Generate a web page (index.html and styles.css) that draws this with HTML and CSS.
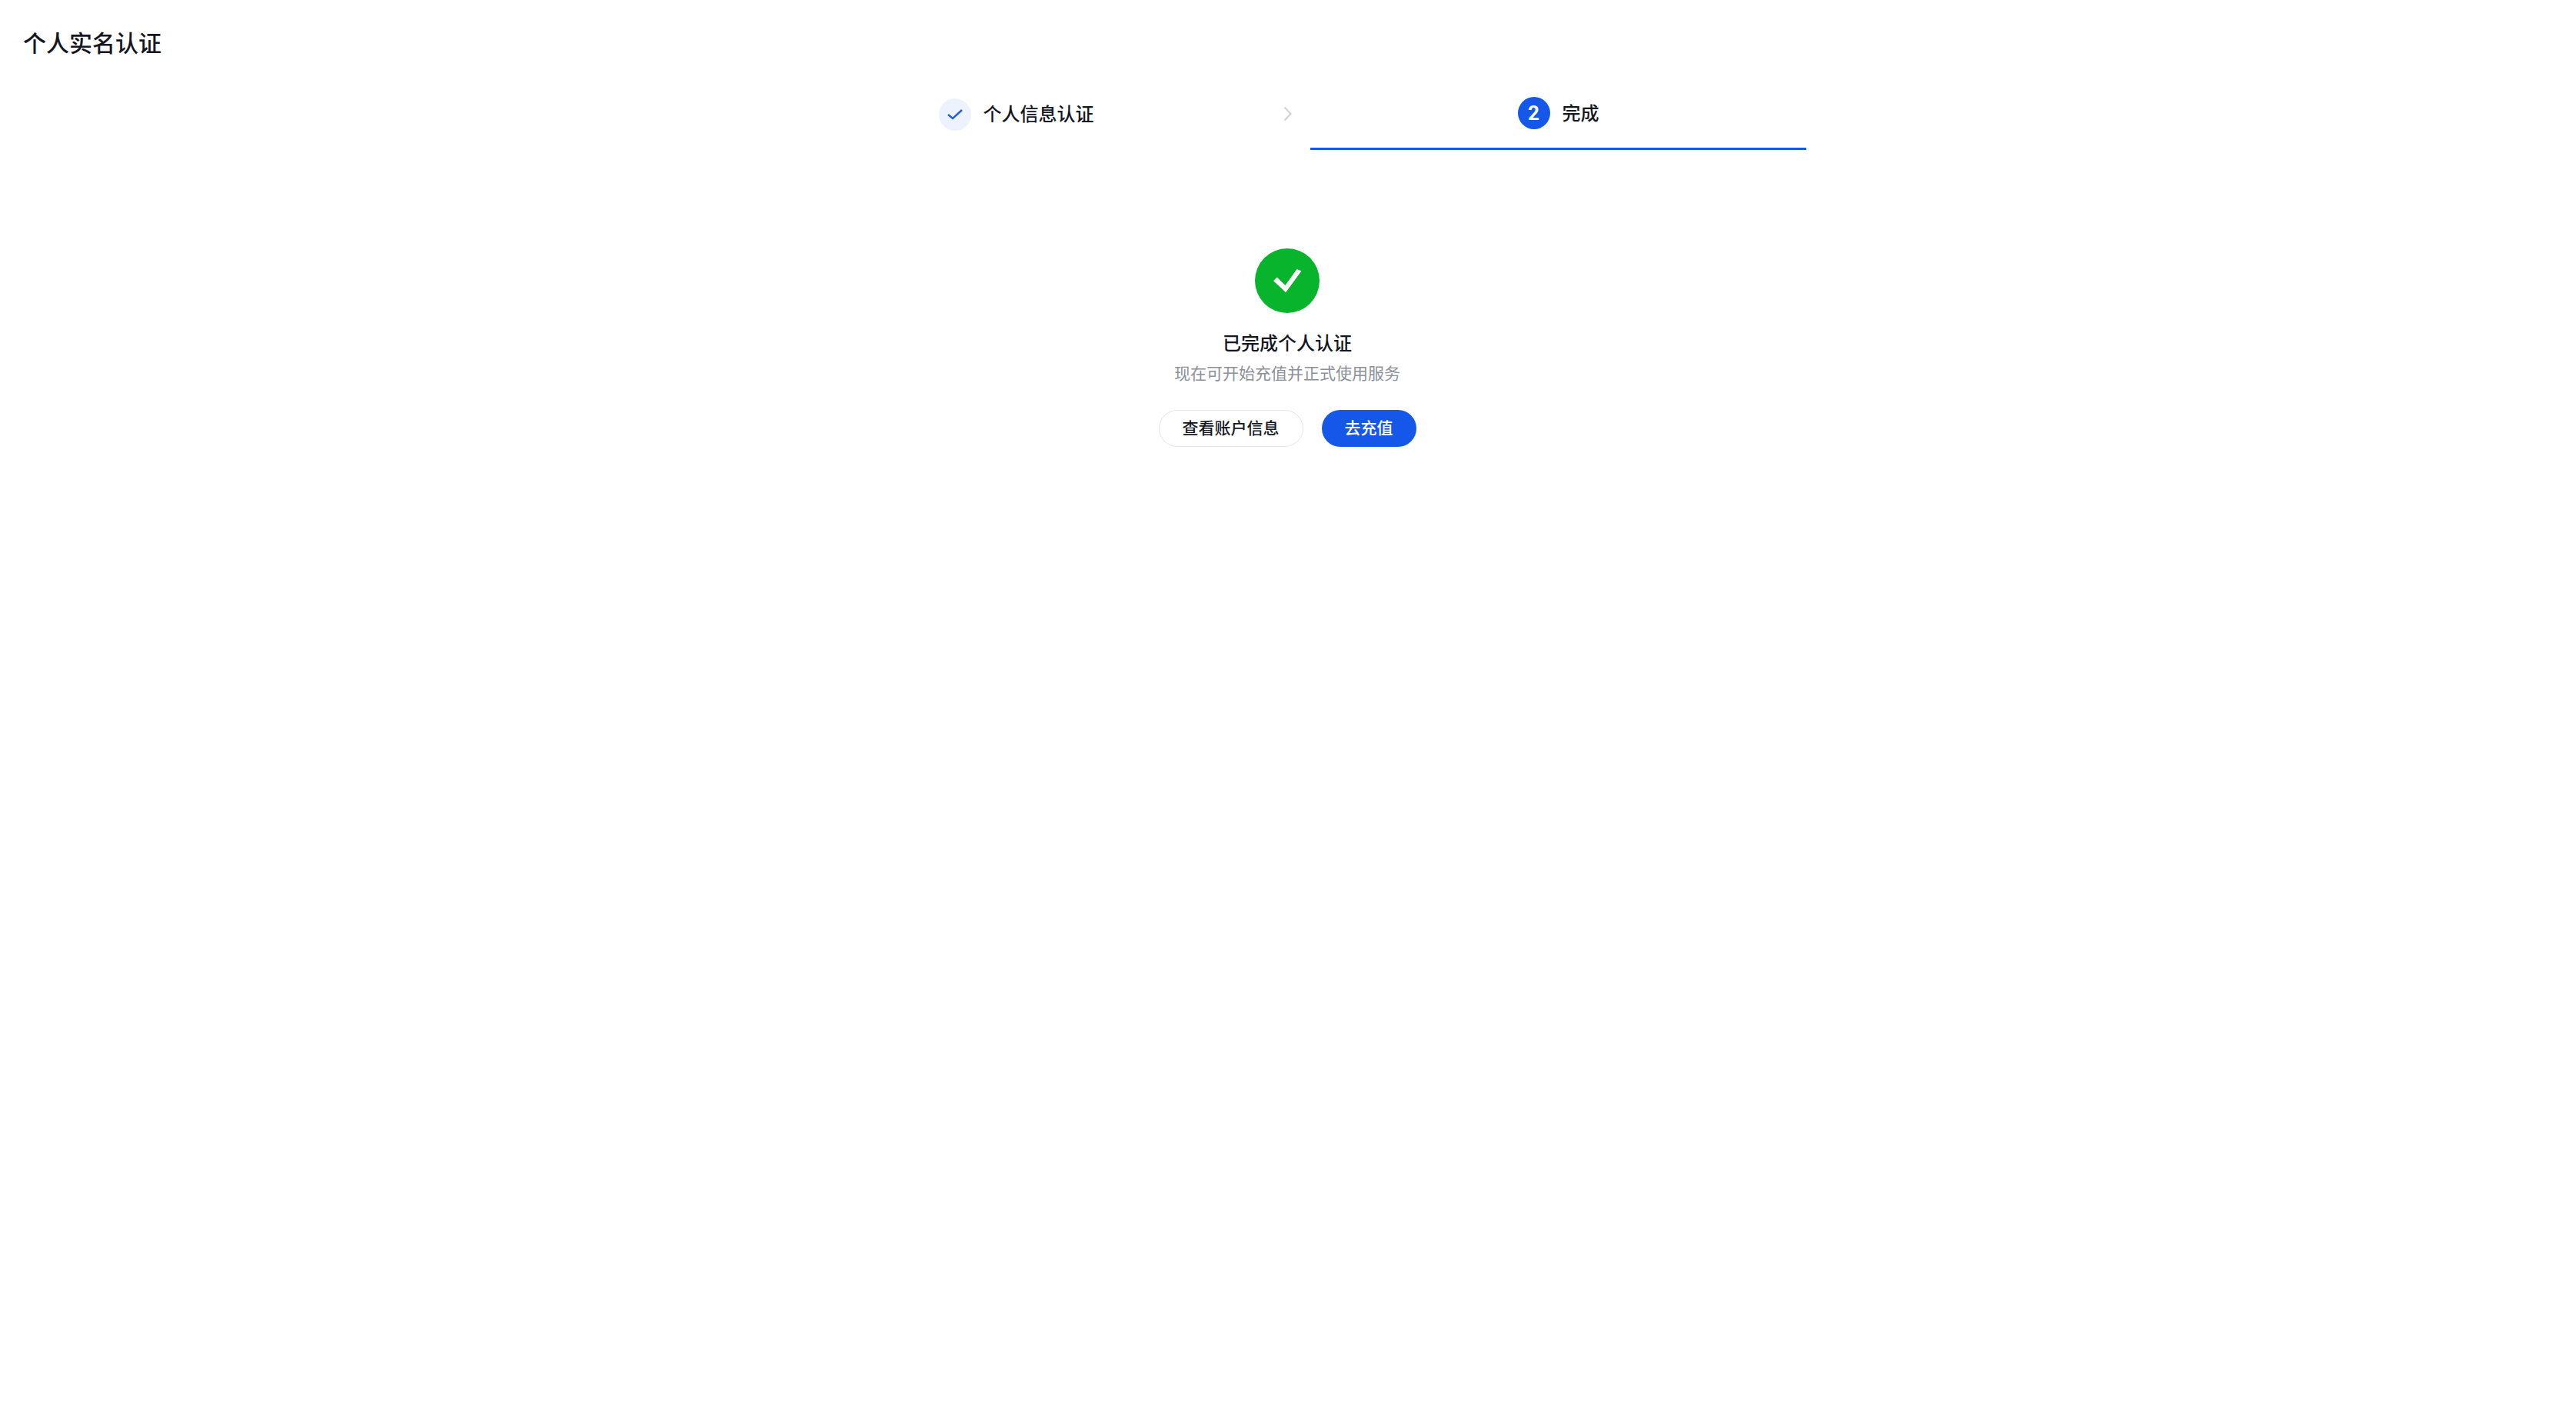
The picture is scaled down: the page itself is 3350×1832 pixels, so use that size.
FILE: index.html
```html
<!DOCTYPE html>
<html lang="zh-CN">
<head>
<meta charset="utf-8">
<title>个人实名认证</title>
<link rel="stylesheet" href="styles.css">
</head>
<body>
<main class="page">
  <h1 class="page-title">个人实名认证</h1>
  <nav class="steps">
    <div class="step">
      <span class="step-icon step-icon-done">
        <svg class="step-check" viewBox="0 0 20 16" aria-hidden="true"><path d="M1 8 L7 13 L19 2"/></svg>
      </span>
      <span class="step-label">个人信息认证</span>
    </div>
    <div class="step-sep">
      <svg class="step-chevron" viewBox="0 0 11 20" aria-hidden="true"><path d="M1.5 1.5 L9.5 10 L1.5 18.5"/></svg>
    </div>
    <div class="step step-active">
      <span class="step-icon step-icon-current">2</span>
      <span class="step-label">完成</span>
    </div>
  </nav>
  <section class="result">
    <div class="result-icon">
      <svg class="result-check" viewBox="0 0 84 84" aria-hidden="true"><path d="M24.6 42.2 L28.6 38 L39.6 48.4 L54.6 27.6 L59.8 29.6 L40 56.6 Z"/></svg>
    </div>
    <h2 class="result-title">已完成个人认证</h2>
    <p class="result-desc">现在可开始充值并正式使用服务</p>
    <div class="result-actions">
      <button class="btn btn-outline" type="button">查看账户信息</button>
      <button class="btn btn-primary" type="button">去充值</button>
    </div>
  </section>
</main>
</body>
</html>
```
FILE: styles.css
```css
* {
  box-sizing: border-box;
}

html,
body {
  margin: 0;
  height: 100%;
  background: #fff;
}

body {
  font-family: "Noto Sans CJK SC", "Noto Sans", sans-serif;
  color: #14171f;
}

.page {
  display: flex;
  flex-direction: column;
  padding: 34px 2px 0 0;
}

.page-title {
  margin: 0 0 0 30px;
  font-size: 30px;
  line-height: 40px;
  font-weight: 500;
}

.steps {
  display: flex;
  align-items: center;
  justify-content: center;
  margin-top: 52px;
}

.step {
  display: flex;
  align-items: center;
  justify-content: center;
  gap: 16px;
  width: 645px;
  height: 66px;
  padding-bottom: 24px;
}

.step-active {
  height: 69px;
  border-bottom: 3px solid #1557e8;
}

.step-sep {
  display: flex;
  justify-content: center;
  width: 60px;
  padding-bottom: 24px;
}

.step-chevron {
  display: block;
  width: 11px;
  height: 20px;
  margin-top: -2px;
  fill: none;
  stroke: #cfd2d6;
  stroke-width: 2.2;
}

.step-icon {
  display: flex;
  align-items: center;
  justify-content: center;
  width: 42px;
  height: 42px;
  border-radius: 50%;
  flex: none;
}

.step-icon-done {
  background: #edf3fe;
}

.step-icon-current {
  background: #1557e8;
  color: #fff;
  font-family: "Roboto", sans-serif;
  font-size: 26px;
  font-weight: 700;
}

.step-check {
  display: block;
  width: 20px;
  height: 16px;
  fill: none;
  stroke: #1f5fe0;
  stroke-width: 2.4;
}

.step-label {
  margin-bottom: 3px;
  font-size: 24px;
  line-height: 32px;
  font-weight: 500;
}

.result {
  display: flex;
  flex-direction: column;
  align-items: center;
  margin-top: 128px;
}

.result-icon {
  width: 84px;
  height: 84px;
  border-radius: 50%;
  background: #07b42c;
}

.result-check {
  display: block;
  width: 84px;
  height: 84px;
  fill: #fff;
  stroke: #fff;
  stroke-width: 1;
  stroke-linejoin: round;
}

.result-title {
  margin: 22px 0 0;
  font-size: 24px;
  line-height: 32px;
  font-weight: 500;
}

.result-desc {
  margin: 8px 0 0;
  font-size: 21px;
  line-height: 30px;
  color: #8b9099;
}

.result-actions {
  display: flex;
  gap: 24px;
  margin-top: 34px;
}

.btn {
  height: 48px;
  padding: 0 30px 3px;
  border-radius: 24px;
  border: 0;
  font-family: inherit;
  font-size: 21px;
  font-weight: 500;
  line-height: 1;
}

.btn-outline {
  background: #fff;
  border: 1px solid #e3e5e8;
  color: #14171f;
}

.btn-primary {
  background: #1557e8;
  color: #fff;
}
```
